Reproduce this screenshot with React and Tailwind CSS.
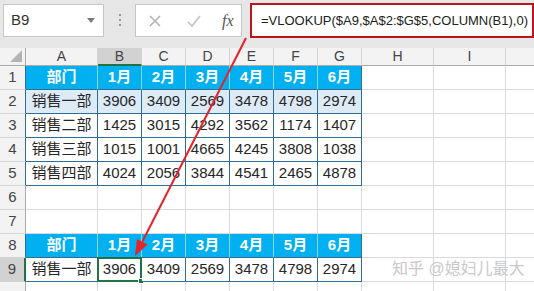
import React from 'react';

const COLS = ['A', 'B', 'C', 'D', 'E', 'F', 'G', 'H', 'I', 'J'];

const HEAD = ['部门', '1月', '2月', '3月', '4月', '5月', '6月'];
const DATA = [
  ['销售一部', '3906', '3409', '2569', '3478', '4798', '2974'],
  ['销售二部', '1425', '3015', '4292', '3562', '1174', '1407'],
  ['销售三部', '1015', '1001', '4665', '4245', '3808', '1038'],
  ['销售四部', '4024', '2056', '3844', '4541', '2465', '4878'],
];

// what sits in each sheet row (1..10)
const ROWS = [
  { kind: 'head', cells: HEAD },
  { kind: 'fill', cells: DATA[0] },
  { kind: 'data', cells: DATA[1] },
  { kind: 'data', cells: DATA[2] },
  { kind: 'data', cells: DATA[3] },
  { kind: 'empty' },
  { kind: 'empty' },
  { kind: 'head', cells: HEAD },
  { kind: 'data', cells: DATA[0], selected: true },
  { kind: 'empty', hidden: true },
];

const font = "font-['Liberation_Sans','Noto_Sans_CJK_SC',sans-serif]";

function RowHeader({ n, inTable, selected }) {
  let cls = 'flex items-center justify-center border-b border-b-[#d4d4d4] text-[15px] text-[#444] ';
  if (selected) cls += 'bg-[#d2d2d2] border-r-2 border-r-[#217346]';
  else if (inTable) cls += 'bg-[#f3f3f3] border-r border-r-[#2f6e94]';
  else cls += 'bg-[#f3f3f3] border-r border-r-[#ababab]';
  return <div className={cls}>{n}</div>;
}

function Cell({ kind, text, last, selected }) {
  if (kind === 'head') {
    return (
      <div
        className={
          'flex items-center justify-center bg-[#00b0f0] text-white font-bold text-[15px] border-b border-b-[#2f6e94] ' +
          (last ? 'border-r border-r-[#2f6e94]' : 'border-r border-r-[#8fd6f3]')
        }
      >
        {text}
      </div>
    );
  }
  if (kind === 'fill' || kind === 'data') {
    return (
      <div
        className={
          'relative flex items-center justify-center text-[15px] text-[#262626] border-r border-b border-[#2f6e94] ' +
          (kind === 'fill' ? 'bg-[#ddebf7]' : 'bg-white')
        }
      >
        {text}
        {selected && (
          <div className="absolute -left-[1px] -top-[1px] w-[45px] h-[25px] border-2 border-[#217346]">
            <div className="absolute -right-[4px] -bottom-[4px] w-[6px] h-[6px] bg-[#217346] border border-white" />
          </div>
        )}
      </div>
    );
  }
  return <div className="border-r border-b border-[#d9d9d9] bg-white" />;
}

export default function App() {
  return (
    <div className={'relative w-[534px] h-[291px] overflow-hidden bg-white ' + font}>
      {/* formula bar */}
      <div className="h-[48px] bg-[#e7e7e7] flex items-start pt-[3px]">
        <div className="ml-[3px] mt-[1px] w-[101px] h-[33px] bg-white border border-[#c6c6c6] flex items-center justify-between px-[7px]">
          <span className="text-[15px] text-[#333]">B9</span>
          <span className="w-0 h-0 border-l-[4px] border-r-[4px] border-t-[5px] border-l-transparent border-r-transparent border-t-[#7a7a7a] mr-[1px]" />
        </div>
        <div className="w-[31px] h-[34px] flex flex-col items-center justify-center gap-[3px]">
          <span className="w-[2px] h-[2px] bg-[#9a9a9a]" />
          <span className="w-[2px] h-[2px] bg-[#9a9a9a]" />
          <span className="w-[2px] h-[2px] bg-[#9a9a9a]" />
        </div>
        <div className="mt-[1px] w-[107px] h-[33px] bg-white border border-[#c6c6c6] flex items-center">
          <svg width="14" height="14" viewBox="0 0 14 14" className="ml-[12px]">
            <path d="M2 2 L12 12 M12 2 L2 12" stroke="#b0b0b0" strokeWidth="1.5" />
          </svg>
          <svg width="16" height="14" viewBox="0 0 16 14" className="ml-[24px]">
            <path d="M2 8 L6 12 L14 2" stroke="#c2c2c2" strokeWidth="1.6" fill="none" />
          </svg>
          <span className="ml-[20px] text-[16px] italic text-[#555] font-['Liberation_Serif',serif]">fx</span>
        </div>
        <div className="ml-[8px] w-[284px] h-[35px] border-2 border-[#c0141c] bg-white flex items-center pl-[9px]">
          <span className="text-[13px] text-[#222] whitespace-nowrap">=VLOOKUP($A9,$A$2:$G$5,COLUMN(B1),0)</span>
        </div>
      </div>

      {/* sheet grid */}
      <div className="w-max grid grid-cols-[26px_72px_44px_44px_44px_44px_44px_44px_72px_72px_72px] grid-rows-[18px_repeat(10,24px)]">
        <div className="relative bg-[#f3f3f3] border-r border-b border-[#ababab]">
          <svg width="12" height="12" viewBox="0 0 12 12" className="absolute right-[3px] bottom-[3px]">
            <polygon points="12,0 12,12 0,12" fill="#b4b4b4" />
          </svg>
        </div>
        {COLS.map((c) => (
          <div
            key={c}
            className={
              'flex items-center justify-center text-[14px] text-[#444] border-r border-r-[#d4d4d4] ' +
              (c === 'B' ? 'bg-[#d2d2d2] border-b-2 border-b-[#217346]' : 'bg-[#f3f3f3] border-b border-b-[#ababab]')
            }
          >
            {c === 'J' ? '' : c}
          </div>
        ))}

        {ROWS.map((row, i) => {
          const inTable = row.kind !== 'empty';
          return (
            <React.Fragment key={i}>
              <RowHeader n={row.hidden ? '' : i + 1} inTable={inTable} selected={row.selected} />
              {COLS.map((c, j) =>
                inTable && j < 7 ? (
                  <Cell key={c} kind={row.kind} text={row.cells[j]} last={j === 6} selected={row.selected && j === 1} />
                ) : (
                  <Cell key={c} kind="empty" />
                )
              )}
            </React.Fragment>
          );
        })}
      </div>

      {/* watermark */}
      <div className="absolute left-[392px] top-[257px] text-[16px] text-[#c9c9c9] whitespace-nowrap">
        知乎 @媳妇儿最大
      </div>

      {/* red arrow */}
      <svg className="absolute left-0 top-0 pointer-events-none" width="534" height="291" viewBox="0 0 534 291">
        <line x1="246" y1="38" x2="142.3" y2="241.8" stroke="#e3242b" strokeWidth="2" />
        <polygon points="135,256 147.6,244.5 136.9,239" fill="#e3242b" />
      </svg>
    </div>
  );
}
